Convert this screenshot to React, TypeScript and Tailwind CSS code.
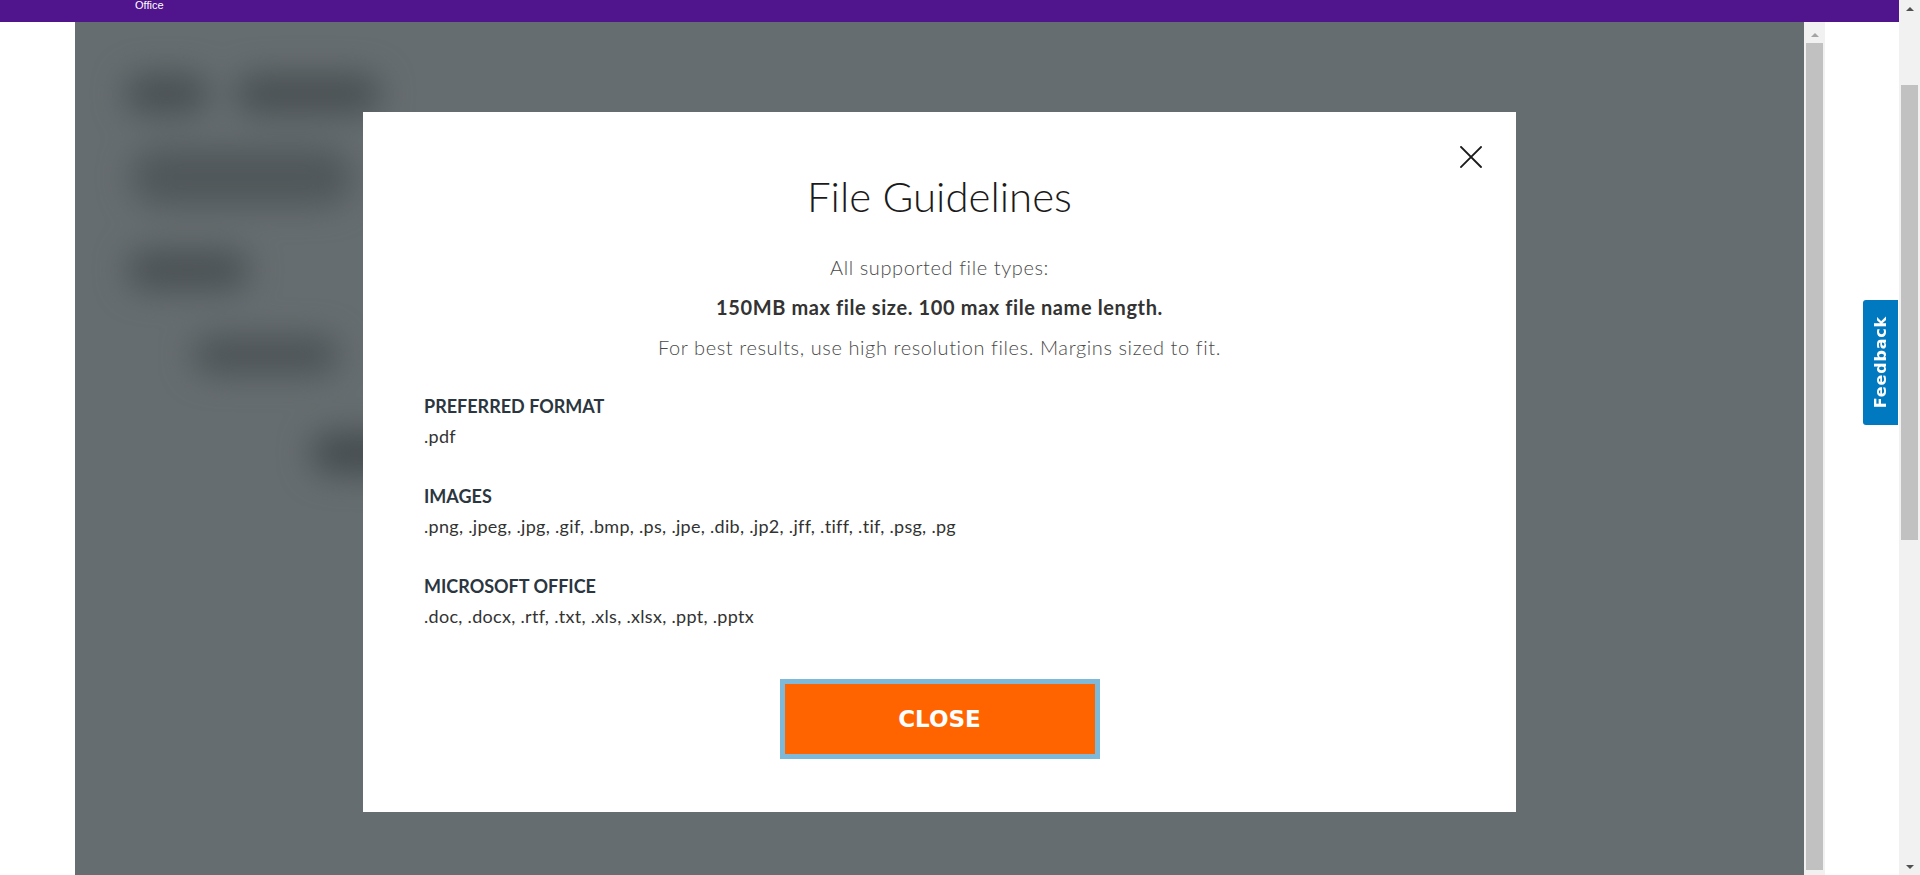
import React from "react";

function CloseIcon() {
  return (
    <svg width="22" height="22" viewBox="0 0 22 22" fill="none">
      <path d="M1 1 L21 21 M21 1 L1 21" stroke="#1a1a1a" strokeWidth="1.8" strokeLinecap="square" />
    </svg>
  );
}

function Section({ title, value, first }: { title: string; value: string; first?: boolean }) {
  return (
    <div className={first ? "" : "mt-[36px]"}>
      <div className="text-[18px] leading-[24px] font-bold text-[#2b3640]">{title}</div>
      <div className="mt-[6px] text-[18px] leading-[24px] tracking-[0.3px] text-[#333333]">{value}</div>
    </div>
  );
}

export default function App() {
  return (
    <div className="w-[1920px] h-[875px] flex overflow-hidden bg-white font-['Lato',sans-serif]">
      <div className="flex-1 flex flex-col min-w-0">
        {/* top bar */}
        <div className="h-[22px] shrink-0 bg-[#50148c] pl-[135px]">
          <div className="text-[11px] leading-[11px] text-white font-['Liberation_Sans',sans-serif]">Office</div>
        </div>
        <div className="flex-1 flex min-h-0">
          <div className="w-[75px] shrink-0 bg-white" />
          {/* dimmed area */}
          <div className="relative w-[1729px] shrink-0 bg-[#666d70] overflow-hidden">
            {/* blurred page content behind */}
            <div className="flex flex-col items-start pl-[50px] pt-[52px] blur-[16px]">
              <div className="flex gap-[26px]">
                <div className="w-[84px] h-[40px] rounded-full bg-[#495053]" />
                <div className="w-[146px] h-[40px] rounded-full bg-[#495053]" />
              </div>
              <div className="mt-[34px] ml-[6px] w-[222px] h-[58px] rounded-[28px] bg-[#50575a]" />
              <div className="mt-[44px] ml-[2px] w-[122px] h-[40px] rounded-full bg-[#4a5154]" />
              <div className="mt-[46px] ml-[68px] w-[146px] h-[38px] rounded-full bg-[#4c5356]" />
              <div className="mt-[58px] ml-[186px] w-[136px] h-[42px] rounded-full bg-[#454c4f]" />
            </div>
            {/* modal */}
            <div className="absolute inset-0 flex justify-center pt-[90px]">
              <div className="relative w-[1153px] h-[700px] bg-white flex flex-col">
                <button className="absolute top-[34px] right-[34px] w-[22px] h-[22px]">
                  <CloseIcon />
                </button>
                <h1 className="pt-[60px] text-center text-[42px] leading-[48px] font-light text-[#1a1a1a]">File Guidelines</h1>
                <div className="mt-[27px] text-center text-[20px] leading-[40px] tracking-[0.6px]">
                  <p className="font-light text-[#4a4a4a]">All supported file types:</p>
                  <p className="font-bold text-[#333333]">150MB max file size. 100 max file name length.</p>
                  <p className="font-light text-[#4a4a4a]">For best results, use high resolution files. Margins sized to fit.</p>
                </div>
                <div className="mt-[27px] pl-[61px]">
                  <Section first title="PREFERRED FORMAT" value=".pdf" />
                  <Section title="IMAGES" value=".png, .jpeg, .jpg, .gif, .bmp, .ps, .jpe, .dib, .jp2, .jff, .tiff, .tif, .psg, .pg" />
                  <Section title="MICROSOFT OFFICE" value=".doc, .docx, .rtf, .txt, .xls, .xlsx, .ppt, .pptx" />
                </div>
                <div className="mt-[51px] flex justify-center">
                  <button className="w-[320px] h-[80px] border-[5px] border-[#7fb9d9] bg-[#ff6400] text-white text-[23px] font-bold font-['DejaVu_Sans',sans-serif] flex items-center justify-center">
                    CLOSE
                  </button>
                </div>
              </div>
            </div>
          </div>
          {/* inner scrollbar */}
          <div className="w-[21px] shrink-0 bg-[#f1f1f1] flex flex-col items-center">
            <div className="h-[21px] w-full flex items-center justify-center pt-[4px]">
              <div className="w-0 h-0 border-x-[4px] border-x-transparent border-b-[4px] border-b-[#a3a3a3]" />
            </div>
            <div className="w-[17px] h-[827px] bg-[#c1c1c1]" />
          </div>
          {/* right white strip with feedback tab */}
          <div className="flex-1 bg-white flex flex-col items-end pt-[278px] pr-[1px]">
            <div className="w-[35px] h-[125px] bg-[#0079c1] rounded-l-[3px] flex items-center justify-center">
              <span className="[writing-mode:vertical-rl] rotate-180 text-white font-bold text-[16px] tracking-[0.8px] font-['DejaVu_Sans',sans-serif]">
                Feedback
              </span>
            </div>
          </div>
        </div>
      </div>
      {/* page scrollbar */}
      <div className="w-[21px] shrink-0 bg-[#f1f1f1] flex flex-col items-center">
        <div className="h-[17px] w-full flex items-center justify-center">
          <div className="w-0 h-0 border-x-[4px] border-x-transparent border-b-[4px] border-b-[#505050]" />
        </div>
        <div className="mt-[68px] w-[17px] h-[455px] bg-[#c1c1c1]" />
        <div className="flex-1" />
        <div className="h-[17px] w-full flex items-center justify-center">
          <div className="w-0 h-0 border-x-[4px] border-x-transparent border-t-[4px] border-t-[#505050]" />
        </div>
      </div>
    </div>
  );
}
